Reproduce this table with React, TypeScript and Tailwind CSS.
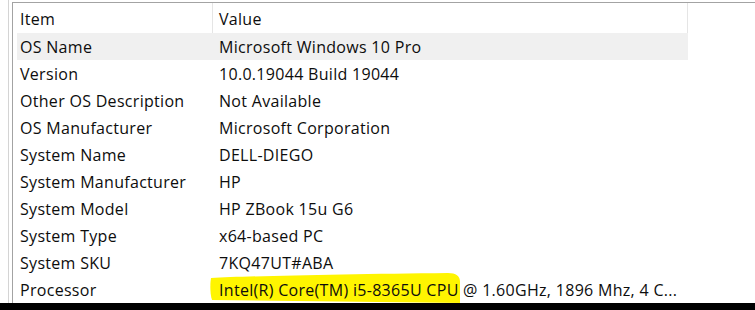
import React from "react";

const rows: [string, string][] = [
  ["OS Name", "Microsoft Windows 10 Pro"],
  ["Version", "10.0.19044 Build 19044"],
  ["Other OS Description", "Not Available"],
  ["OS Manufacturer", "Microsoft Corporation"],
  ["System Name", "DELL-DIEGO"],
  ["System Manufacturer", "HP"],
  ["System Model", "HP ZBook 15u G6"],
  ["System Type", "x64-based PC"],
  ["System SKU", "7KQ47UT#ABA"],
];

export default function App() {
  return (
    <div
      className="w-[755px] h-[310px] bg-white flex flex-col overflow-hidden text-[#0d0d0d] text-[16px] leading-none tracking-[0.3px]"
      style={{ fontFamily: '"Open Sans", "Noto Sans", sans-serif' }}
    >
      <div className="flex flex-1 min-h-0">
        <div className="w-[8px] shrink-0" />
        <div className="w-px bg-[#d4d4d4] shrink-0" />
        <div className="w-[3px] shrink-0" />
        <div className="flex-1 flex flex-col pt-[2px]">
          <div className="flex-1 flex flex-col border-t border-l border-[#a3a3a3]">
            {/* header */}
            <div className="flex h-[30px] items-center">
              <div className="w-[200px] h-full flex items-center pl-[7px] pt-[2px] border-r border-[#e5e5e5]">Item</div>
              <div className="w-[475px] h-full flex items-center pl-[6px] pt-[2px] border-r border-[#e5e5e5]">Value</div>
            </div>
            <div className="flex flex-col pl-[4px]">
              {rows.map(([k, v], i) => (
                <div
                  key={k}
                  className={`flex h-[27px] items-center w-[671px] ${i === 0 ? "bg-[#f0f0f0]" : ""}`}
                >
                  <div className="w-[196px] pl-[3px]">{k}</div>
                  <div className="pl-[6px] whitespace-nowrap">{v}</div>
                </div>
              ))}
              <div className="flex h-[27px] items-center w-[671px]">
                <div className="w-[196px] pl-[3px]">Processor</div>
                <div className="relative pl-[6px] whitespace-nowrap">
                  <svg
                    className="absolute left-[-3px] top-[-10px]"
                    width="256"
                    height="32"
                    viewBox="0 0 256 32"
                  >
                    <path
                      d="M1,6 C40,4 140,2 238,1 C246,1 250,4 250,10 L250,31 L2,28 C0,22 0,12 1,6 Z"
                      fill="#fff500"
                    />
                  </svg>
                  <span className="relative">Intel(R) Core(TM) i5-8365U CPU @ 1.60GHz, 1896 Mhz, 4 C...</span>
                </div>
              </div>
            </div>
          </div>
        </div>
      </div>
      <div className="h-[7px] bg-black shrink-0" />
    </div>
  );
}
